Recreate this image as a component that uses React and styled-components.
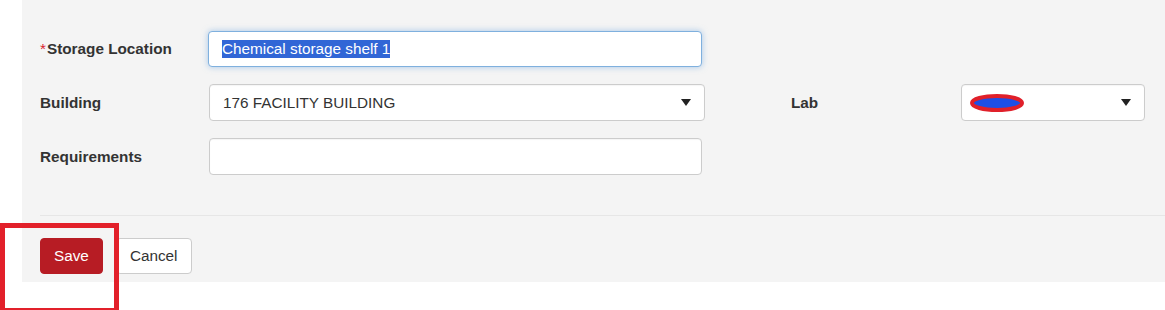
import React from "react";
import styled, { createGlobalStyle } from "styled-components";

const Global = createGlobalStyle`
  html, body { margin: 0; padding: 0; background: #ffffff; }
  body { font-family: "Liberation Sans", Arial, sans-serif; font-size: 15.3px; color: #333; }
  * { box-sizing: border-box; }
`;

const Page = styled.div`
  position: relative;
  width: 1165px;
  height: 310px;
  padding-left: 22px;
`;

const Panel = styled.div`
  background: #f4f4f4;
  height: 282px;
  padding: 31px 0 8px 18px;
  display: flex;
  flex-direction: column;
`;

const FormGrid = styled.div`
  display: grid;
  grid-template-columns: 169px 496px 86px 170px 184px;
  grid-auto-rows: auto;
  row-gap: 17px;
  align-items: center;
`;

const Label = styled.label`
  font-weight: bold;
  font-size: 15.3px;
  color: #333;
  grid-column: ${(p) => p.$col || 1};
  white-space: nowrap;
`;

const Star = styled.span`
  color: #d9232d;
  font-weight: normal;
  margin-right: 1px;
`;

const Field = styled.div`
  grid-column: ${(p) => p.$col || 2};
  height: ${(p) => p.$h || 37}px;
  width: ${(p) => p.$w || "100%"};
  background: #fff;
  border: 1px solid ${(p) => (p.$focus ? "#7fb0de" : "#cccccc")};
  border-radius: 4px;
  box-shadow: ${(p) =>
    p.$focus ? "0 0 6px rgba(102,160,220,0.55)" : "inset 0 1px 1px rgba(0,0,0,0.04)"};
  display: flex;
  align-items: center;
  padding: 0 12px 0 13px;
  font-size: 15.3px;
  color: #333;
  justify-content: space-between;
`;

const Selected = styled.span`
  background: #3166d6;
  color: #fff;
  line-height: 18px;
`;

const Arrow = styled.span`
  width: 0;
  height: 0;
  border-left: 5px solid transparent;
  border-right: 5px solid transparent;
  border-top: 7px solid #222;
  margin-right: 1px;
`;

const Divider = styled.div`
  margin-top: 40px;
  height: 1px;
  background: #e6e6e6;
`;

const Footer = styled.div`
  padding-top: 22px;
  display: flex;
  gap: 13px;
`;

const Button = styled.button`
  height: 36px;
  padding: 0 13px;
  border-radius: 4px;
  font-family: "Liberation Sans", Arial, sans-serif;
  font-size: 15.3px;
  border: 1px solid ${(p) => (p.$primary ? "#b71c24" : "#cccccc")};
  background: ${(p) => (p.$primary ? "#b71c24" : "#ffffff")};
  color: ${(p) => (p.$primary ? "#ffffff" : "#333333")};
`;

const Highlight = styled.div`
  position: absolute;
  left: 0;
  top: 223px;
  width: 119px;
  height: 90px;
  border: 5px solid #e2202a;
  pointer-events: none;
`;

function Redacted() {
  return (
    <svg width="56" height="18" viewBox="0 0 56 18">
      <ellipse cx="27" cy="9" rx="25" ry="7" fill="#1d4fe6" stroke="#e0202a" strokeWidth="4" />
    </svg>
  );
}

export default function App() {
  return (
    <>
      <Global />
      <Page>
        <Panel>
          <FormGrid>
            <Label>
              <Star>*</Star>Storage Location
            </Label>
            <Field $focus $h={36} $w="494px" style={{ marginLeft: "-1px" }}>
              <Selected>Chemical storage shelf 1</Selected>
            </Field>

            <Label>Building</Label>
            <Field>
              <span>176 FACILITY BUILDING</span>
              <Arrow />
            </Field>
            <Label $col={4}>Lab</Label>
            <Field $col={5} style={{ paddingLeft: "8px" }}>
              <Redacted />
              <Arrow />
            </Field>

            <Label>Requirements</Label>
            <Field $w="493px" />
          </FormGrid>
          <Divider />
          <Footer>
            <Button $primary>Save</Button>
            <Button>Cancel</Button>
          </Footer>
        </Panel>
        <Highlight />
      </Page>
    </>
  );
}
